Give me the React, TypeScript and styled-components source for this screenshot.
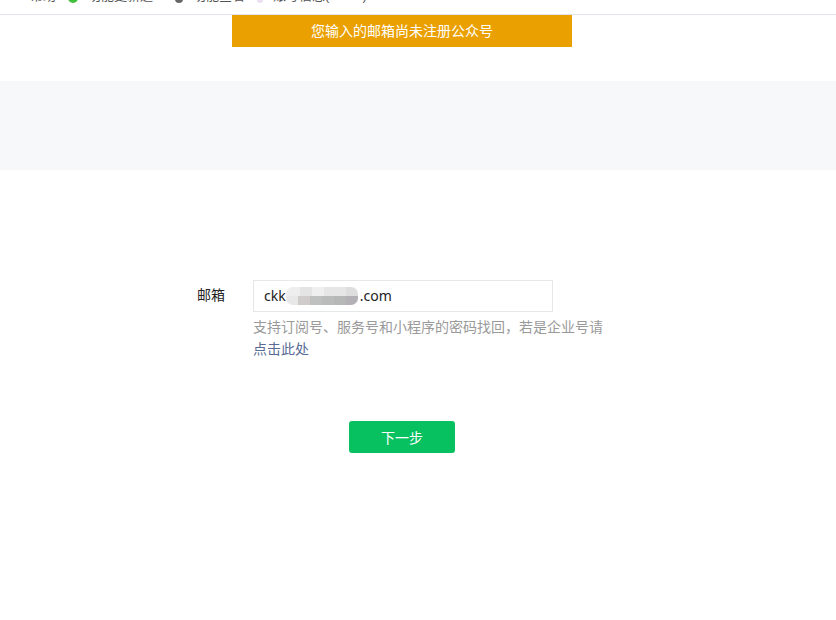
import { FC } from 'react';
import styled, { createGlobalStyle } from 'styled-components';

const GlobalStyle = createGlobalStyle`
  html, body {
    margin: 0;
    padding: 0;
    background: #fff;
  }
  body {
    font-family: "Liberation Sans", "Noto Sans CJK SC", sans-serif;
    overflow: hidden;
  }
`;

const Page = styled.div`
  width: 836px;
  height: 620px;
  overflow: hidden;
  display: flex;
  flex-direction: column;
`;

// the header is scrolled out of view, only the lower edge of its row is left
const TopBar = styled.div`
  height: 14px;
  border-bottom: 1px solid #e4e4ec;
`;

const TopStrip = styled.div`
  height: 3px;
  overflow: hidden;
  display: flex;
  align-items: flex-end;
  padding-left: 30px;
  font-size: 13px;
  color: #555;
`;

const TopItem = styled.span<{ $after: number }>`
  display: flex;
  align-items: flex-end;
  gap: 10px;
  line-height: 20px;
  height: 20px;
  flex: none;
  margin-bottom: -3px;
  margin-right: ${(p) => p.$after}px;
  white-space: nowrap;
`;

const TopIcon = styled.i<{ $color: string; $size: number }>`
  width: ${(p) => p.$size}px;
  height: ${(p) => p.$size}px;
  margin-bottom: 3px;
  border-radius: 50%;
  background: ${(p) => p.$color};
`;

const ParenGap = styled.span`
  display: inline-block;
  width: 33px;
`;

const Notice = styled.div`
  align-self: flex-start;
  margin-left: 232px;
  width: 340px;
  height: 32px;
  line-height: 32px;
  background: #eaa000;
  color: #fff;
  font-size: 14px;
  text-align: center;
`;

const Band = styled.div`
  margin-top: 34px;
  height: 89px;
  background: #f6f8f9;
`;

const Form = styled.div`
  margin-top: 110px;
  display: flex;
  align-items: flex-start;
`;

const Label = styled.label`
  width: 225px;
  padding-top: 5px;
  line-height: 20px;
  text-align: right;
  font-size: 14px;
  color: #222;
`;

const Field = styled.div`
  margin-left: 28px;
  width: 352px;
`;

const InputBox = styled.div`
  box-sizing: border-box;
  width: 300px;
  height: 32px;
  border: 1px solid #e4e8eb;
  padding: 0 0 2px 10px;
  display: flex;
  align-items: center;
  font-family: "Noto Sans", sans-serif;
  font-size: 14px;
  color: #222;
`;

// mosaic the address was masked with in the screenshot
const Mosaic = styled.span`
  width: 72px;
  height: 18px;
  margin: 1px 2px 0 0;
  border-radius: 7px;
  background:
    linear-gradient(90deg,
      #eeeeee 0 14px, #e4e4e4 14px 26px, #efefef 26px 38px,
      #e6e6e6 38px 60px, #dededf 60px 72px) top / 100% 50% no-repeat,
    linear-gradient(90deg,
      #e9e8e8 0 12px, #cfcccb 12px 24px, #bfc1c0 24px 36px,
      #b9bcbb 36px 48px, #b6b8b8 48px 60px, #b3b0b6 60px 72px) bottom / 100% 50% no-repeat;
`;

const Hint = styled.p`
  margin: 4px 0 0;
  font-size: 14px;
  line-height: 22px;
  color: #9a9a9a;
`;

const HintLink = styled.a`
  color: #576b95;
  display: block;
`;

const Actions = styled.div`
  margin-top: 61px;
  margin-left: 349px;
`;

const PrimaryButton = styled.button`
  width: 106px;
  height: 32px;
  padding: 0;
  border: 0;
  border-radius: 3px;
  background: #07c160;
  color: #fff;
  font: inherit;
  font-size: 14px;
`;

const App: FC = () => (
  <Page>
    <GlobalStyle />
    <TopBar>
      <TopStrip>
        <TopItem $after={12}>帮助</TopItem>
        <TopItem $after={22}>
          <TopIcon $color="#3fbf3a" $size={10} />
          功能更新通
        </TopItem>
        <TopItem $after={12}>
          <TopIcon $color="#666" $size={8} />
          功能查看
        </TopItem>
        <TopItem $after={0}>
          <TopIcon $color="#eadff0" $size={6} />
          <span>
            账号信息(<ParenGap />)
          </span>
        </TopItem>
      </TopStrip>
    </TopBar>
    <Notice>您输入的邮箱尚未注册公众号</Notice>
    <Band />
    <Form>
      <Label>邮箱</Label>
      <Field>
        <InputBox>
          ckk
          <Mosaic />
          .com
        </InputBox>
        <Hint>
          支持订阅号、服务号和小程序的密码找回，若是企业号请
          <HintLink>点击此处</HintLink>
        </Hint>
      </Field>
    </Form>
    <Actions>
      <PrimaryButton>下一步</PrimaryButton>
    </Actions>
  </Page>
);

export default App;
